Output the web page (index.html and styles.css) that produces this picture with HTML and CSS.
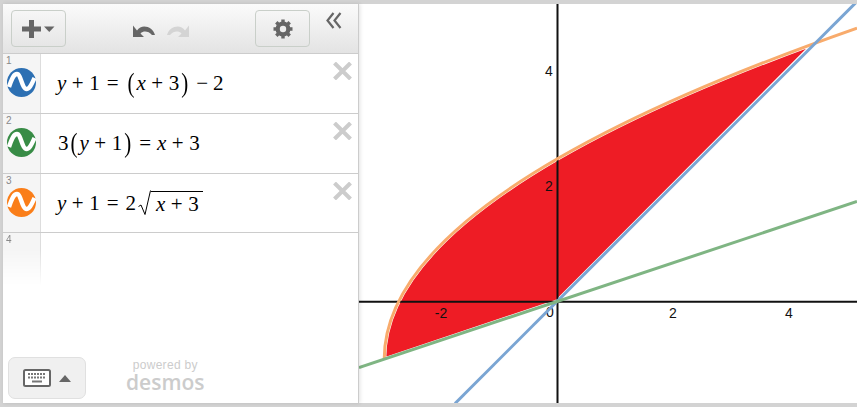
FILE: index.html

```html
<!DOCTYPE html>
<html lang="en">
<head>
  <meta charset="UTF-8" />
  <title>Desmos Graphing Calculator</title>
  <link rel="stylesheet" href="styles.css">
</head>
<body>
  <div class="calc">
    <div class="panel">
      <div class="toolbar">
        <button class="tool-btn">
          <svg width="33" height="20" viewBox="0 0 33 20"><path d="M0 10h19M9.500 1v18" stroke="#666" stroke-width="5" fill="none"/><path d="M22 7.500h10.500l-5.250 5.500z" fill="#666"/></svg>
        </button>
        <div class="history">
          <svg width="24" height="14" viewBox="0 0 24 14"><path d="M1 1.500v11.500h11l-3.500-3.500c3-3 8-2.500 11.500 1.500 2 0 2.500 0 3 0-2-8-13-12-18-4.500z" fill="#666"/></svg>
          <svg width="24" height="14" viewBox="0 0 24 14"><path d="M23 1.500v11.500h-11l3.500-3.500c-3-3-8-2.500-11.500 1.500-2 0-2.500 0-3 0 2-8 13-12 18-4.500z" fill="#d4d4d4"/></svg>
        </div>
        <button class="tool-btn">
          <svg width="20" height="20" viewBox="0 0 20 20"><circle cx="10" cy="10" r="5.500" fill="none" stroke="#666" stroke-width="4"/><path d="M10 0.500v19M0.500 10h19M3.300 3.300l13.400 13.400M16.700 3.300l-13.400 13.400" stroke="#666" stroke-width="3.400"/><circle cx="10" cy="10" r="3.200" fill="#eee"/></svg>
        </button>
        <svg class="collapse" width="16" height="17" viewBox="0 0 16 17"><path d="M7.500 1l-6 7.500 6 7.500M14.500 1l-6 7.500 6 7.500" fill="none" stroke="#666" stroke-width="2.200"/></svg>
      </div>

      <div class="row">
        <div class="gutter">
          <span class="num">1</span>
          <svg class="curve-icon" width="29" height="29" viewBox="0 0 29 29"><circle cx="14.500" cy="14.500" r="14.500" fill="#2d70b3"/><path d="M2 19C5 10 7 6 10 6C14 6 15 21 19.500 21C23 21 25 15 27.500 10" fill="none" stroke="#fff" stroke-width="4.400"/></svg>
        </div>
        <div class="math">
          <i>y</i><span class="op">+</span>1<span class="rel">=</span><span class="paren">(</span><i>x</i><span class="op">+</span>3<span class="paren">)</span><span class="op wide">−</span>2
        </div>
        <svg class="close" width="19" height="18" viewBox="0 0 19 18"><path d="M1.500 1l16 16M17.500 1l-16 16" stroke="#ccc" stroke-width="4"/></svg>
      </div>

      <div class="row">
        <div class="gutter">
          <span class="num">2</span>
          <svg class="curve-icon" width="29" height="29" viewBox="0 0 29 29"><circle cx="14.500" cy="14.500" r="14.500" fill="#388c46"/><path d="M2 19C5 10 7 6 10 6C14 6 15 21 19.500 21C23 21 25 15 27.500 10" fill="none" stroke="#fff" stroke-width="4.400"/></svg>
        </div>
        <div class="math math-two">
          3<span class="paren">(</span><i>y</i><span class="op">+</span>1<span class="paren">)</span><span class="rel">=</span><i>x</i><span class="op">+</span>3
        </div>
        <svg class="close" width="19" height="18" viewBox="0 0 19 18"><path d="M1.500 1l16 16M17.500 1l-16 16" stroke="#ccc" stroke-width="4"/></svg>
      </div>

      <div class="row">
        <div class="gutter">
          <span class="num">3</span>
          <svg class="curve-icon" width="29" height="29" viewBox="0 0 29 29"><circle cx="14.500" cy="14.500" r="14.500" fill="#fa7e19"/><path d="M2 19C5 10 7 6 10 6C14 6 15 21 19.500 21C23 21 25 15 27.500 10" fill="none" stroke="#fff" stroke-width="4.400"/></svg>
        </div>
        <div class="math">
          <i>y</i><span class="op">+</span>1<span class="rel">=</span>2<svg class="radical" width="13" height="26" viewBox="0 0 13 26"><path d="M0.500 16.500l2.500-1.500 4 9.500 5.500-24" fill="none" stroke="#000" stroke-width="1"/></svg><span class="radicand"><i>x</i><span class="op">+</span>3</span>
        </div>
        <svg class="close" width="19" height="18" viewBox="0 0 19 18"><path d="M1.500 1l16 16M17.500 1l-16 16" stroke="#ccc" stroke-width="4"/></svg>
      </div>

      <div class="row row-empty">
        <div class="gutter gutter-fade"><span class="num">4</span></div>
      </div>

      <div class="footer">
        <button class="keys-btn">
          <svg width="28" height="18" viewBox="0 0 28 18"><rect x="1" y="1" width="26" height="16" rx="1.500" fill="#fff" stroke="#666" stroke-width="2"/><path d="M5 5h18M5 8.500h18" stroke="#777" stroke-width="2" stroke-dasharray="2 1"/><path d="M9 12.500h10" stroke="#777" stroke-width="2"/></svg>
          <svg width="12" height="7" viewBox="0 0 12 7"><path d="M0 7l6-7 6 7z" fill="#666"/></svg>
        </button>
        <div class="brand">
          <div class="powered">powered by</div>
          <div class="wordmark">desmos</div>
        </div>
      </div>
    </div>

    <svg class="graph" viewBox="359 4 498 399">
      <path class="region" d="M384.200 359.300Q384.200 201.400 814.100 43.500L557 301.500Z"/>
      <line class="axis" x1="359" y1="301.800" x2="857" y2="301.800"/>
      <line class="axis" x1="557.500" y1="4" x2="557.500" y2="403"/>
      <text class="tick" x="549" y="76">4</text>
      <text class="tick" x="549" y="191">2</text>
      <text class="tick" x="441" y="318">-2</text>
      <text class="tick" x="550" y="317">0</text>
      <text class="tick" x="673" y="318">2</text>
      <text class="tick" x="789" y="318">4</text>
      <path class="line-orange" d="M384.200 359.300Q384.200 193.700 857 28.100"/>
      <line class="line-blue" x1="455" y1="403.500" x2="857" y2="1.500"/>
      <line class="line-green" x1="359" y1="367.500" x2="857" y2="201.500"/>
    </svg>
  </div>
</body>
</html>
```

FILE: styles.css

```css
* {
  box-sizing: border-box;
}
html, body {
  height: 100%;
}
body {
  margin: 0;
  padding: 4px 0 4px 3px;
  background: #d3d3d3;
  font-family: "Liberation Sans", sans-serif;
  overflow: hidden;
}
button {
  font: inherit;
  padding: 0;
}
.calc {
  display: flex;
  height: 399px;
  background: white;
}
.panel {
  display: flex;
  flex-direction: column;
  flex: none;
  width: 356px;
  background: white;
  border-right: 1px solid #ccc;
  box-shadow: 1px 0 4px rgba(0, 0, 0, 0.12);
  position: relative;
}
.toolbar {
  display: flex;
  align-items: flex-start;
  flex: none;
  height: 50px;
  padding: 6px 0 0 8px;
  background: linear-gradient(#fbfbfb, #e3e3e3);
  border-bottom: 1px solid #ccc;
}
.tool-btn {
  display: flex;
  align-items: center;
  justify-content: center;
  width: 55px;
  height: 37px;
  background: linear-gradient(#f6f6f6, #e6e6e6);
  border: 1px solid #c9cfc9;
  border-radius: 4px;
}
.history {
  display: flex;
  gap: 10px;
  margin: 14px 65px 0 66px;
}
.collapse {
  margin: 2px 0 0 16px;
}
.row {
  display: flex;
  flex: none;
  position: relative;
  height: 60px;
  border-bottom: 1px solid #ccc;
}
.row:nth-child(4) {
  height: 59px;
}
.gutter {
  flex: none;
  width: 38px;
  padding: 2px 0 0 3px;
  background: #f5f5f5;
  border-right: 1px solid #ddd;
}
.num {
  display: block;
  height: 10px;
  font-size: 10px;
  line-height: 10px;
  color: #888;
}
.curve-icon {
  display: block;
  margin: 2px 0 0 1px;
}
.math {
  display: flex;
  align-items: center;
  height: 59px;
  padding: 0 0 1px 16px;
  font-family: "Liberation Serif", serif;
  font-size: 21px;
  color: #000;
}
.math-two {
  padding-left: 17px;
}
.math-two .rel {
  margin: 0 6px;
}
.op {
  margin: 0 5.500px;
}
.op.wide {
  margin: 0 5px 0 6px;
}
.rel {
  margin: 0 7px;
}
.paren {
  display: inline-block;
  margin: 0 2px;
  font-weight: normal;
  transform: scale(1, 1.35);
}
.radical {
  margin: 0 0 0 2px;
}
.radicand {
  margin-top: 1px;
  padding: 0 4px 0 5px;
  border-top: 1px solid #000;
  line-height: 25px;
}
.close {
  position: absolute;
  top: 8px;
  right: 6px;
}
.row-empty {
  height: 53px;
  border-bottom: none;
}
.gutter-fade {
  -webkit-mask-image: linear-gradient(black 30%, transparent);
  mask-image: linear-gradient(black 30%, transparent);
}
.footer {
  display: flex;
  align-items: flex-end;
  margin-top: auto;
  padding: 0 0 4px 5px;
}
.keys-btn {
  display: flex;
  align-items: center;
  gap: 8px;
  justify-content: center;
  width: 78px;
  height: 42px;
  background: #f0f0f0;
  border: 1px solid #e0e0e0;
  border-radius: 7px;
}
.brand {
  margin: 0 0 7px 40px;
  text-align: center;
  color: #ccc;
}
.powered {
  font-size: 12px;
  line-height: 13px;
  letter-spacing: 0.3px;
}
.wordmark {
  font-family: "Open Sans", sans-serif;
  font-size: 21px;
  line-height: 20px;
  font-weight: 600;
}
.graph {
  flex: 1;
  display: block;
  height: 399px;
}
.region {
  fill: #ee1c25;
  stroke: white;
  stroke-width: 4;
}
.axis {
  stroke: #111;
  stroke-width: 2;
}
.tick {
  font-size: 14px;
  fill: #111;
  text-anchor: middle;
}
.line-orange, .line-blue, .line-green {
  fill: none;
  stroke-width: 3;
}
.line-orange {
  stroke: #f8ab6c;
}
.line-blue {
  stroke: #7aa5d3;
}
.line-green {
  stroke: #7fb583;
}
```
